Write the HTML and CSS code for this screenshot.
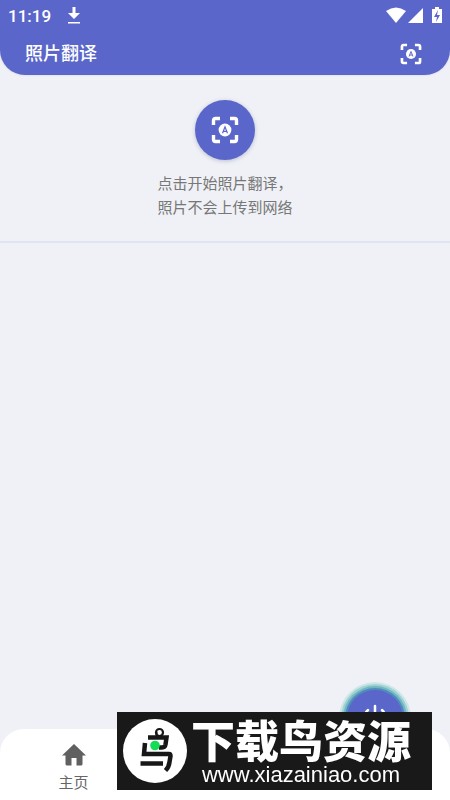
FILE: index.html
```html
<!DOCTYPE html>
<html lang="zh-CN">
<head>
<meta charset="utf-8">
<meta name="viewport" content="width=device-width, initial-scale=1">
<title>照片翻译</title>
<link rel="stylesheet" href="styles.css">
</head>
<body>
<svg class="defs" aria-hidden="true">
  <symbol id="scan" viewBox="0 0 28 28">
    <path d="M2.500 9V4.500Q2.500 2.500 4.500 2.500H9M19 2.500h4.500Q25.500 2.500 25.500 4.500V9M25.500 19v4.500Q25.500 25.500 23.500 25.500H19M9 25.500H4.500Q2.500 25.500 2.500 23.500V19" fill="none" stroke="#fff" stroke-width="3.400"/>
    <circle cx="14" cy="14" r="6.400" fill="#fff"/>
    <path d="M11.500 17.200 14 10.800l2.500 6.400M12.400 15.300h3.200" fill="none" stroke="#5a66c9" stroke-width="1.200"/>
  </symbol>
</svg>
<header class="top">
  <div class="status">
    <span class="clock">11:19</span>
    <svg class="download" viewBox="0 0 14 18"><path d="M5.500 0h3v6H13l-6 6-6-6h4.500zM1 15h12v1.500H1z" fill="#fff"/></svg>
    <svg class="signals" viewBox="0 0 56 18">
      <path d="M0 4Q10-3 20 4L10 16z" fill="#fff"/>
      <path d="M37 1v15H22z" fill="#fff"/>
      <path d="M49 0h4v2h3v14H46V2h3z" fill="#fff"/>
      <path d="m52 3-4 7h3l-1 5 4-7h-3z" fill="#5a66c9"/>
    </svg>
  </div>
  <div class="titlebar">
    <h1>照片翻译</h1>
    <button class="scan-small" aria-label="扫描"><svg viewBox="0 0 28 28"><use href="#scan"/></svg></button>
  </div>
</header>
<main>
  <section class="intro">
    <button class="scan-big" aria-label="开始照片翻译"><svg viewBox="0 0 28 28"><use href="#scan"/></svg></button>
    <p>点击开始照片翻译，<br>照片不会上传到网络</p>
  </section>
</main>
<nav class="bottom">
  <a class="home" href="#">
    <svg viewBox="0 0 24 22"><path d="M12 0 24 11.500h-3.500V20q0 1.500-1.500 1.500h-4.500V14h-5v7.500H5Q3.500 21.500 3.500 20v-8.500H0z" fill="#606060"/></svg>
    <span>主页</span>
  </a>
  <button class="power" aria-label="开关">
    <svg viewBox="0 0 28 28"><path d="M14 2v12M7 6a10.500 10.500 0 1 0 14 0" fill="none" stroke="#fff" stroke-width="2.500" stroke-linecap="round"/></svg>
  </button>
</nav>
<aside class="brand">
  <svg class="bird" viewBox="0 0 64 64">
    <circle cx="32" cy="32" r="32" fill="#fff"/>
    <circle cx="36.500" cy="13.500" r="3.500" fill="none" stroke="#171717" stroke-width="2.200"/>
    <path d="M25 18.500h18.500l-1 7q-.5 3-3.500 3h-3" fill="none" stroke="#171717" stroke-width="4.500"/>
    <path d="M33.500 13v5" stroke="#171717" stroke-width="2"/>
    <path d="M22 24l-1 11h25q1.500 0 1.500 2l-1 6q-.5 5-4 8.500" fill="none" stroke="#171717" stroke-width="4.500"/>
    <path d="M17.500 44.500H40" stroke="#171717" stroke-width="4.500"/>
    <circle cx="32" cy="26.500" r="4.800" fill="#16dc55"/>
  </svg>
  <div class="brand-text">
    <strong>下载鸟资源</strong>
    <span>www.xiazainiao.com</span>
  </div>
</aside>
</body>
</html>
```
FILE: styles.css
```css
* { box-sizing: border-box; }
body {
  margin: 0;
  min-height: 100vh;
  display: flex;
  flex-direction: column;
  background: #eff1f6;
  font-family: Roboto, "Noto Sans CJK SC", sans-serif;
}
button { border: 0; padding: 0; background: none; display: grid; place-items: center; }
svg { display: block; }
.defs { position: absolute; width: 0; height: 0; }
.top {
  background: #5a66c9;
  color: #fff;
  border-radius: 0 0 25px 25px;
  box-shadow: 0 0 2px #c5c9e6;
}
.status { display: flex; align-items: center; height: 31px; padding: 0 8px; }
.clock { font-size: 17px; font-weight: 500; }
.download { width: 14px; height: 18px; margin-left: 16px; }
.signals { width: 56px; height: 18px; margin-left: auto; }
.titlebar {
  display: flex;
  align-items: center;
  justify-content: space-between;
  height: 44px;
  padding: 2px 28px 0 25px;
}
h1 { margin: 0; font-size: 18px; line-height: 42px; font-weight: 500; }
.scan-small svg { width: 22px; height: 22px; }
main { flex: 1; }
.intro {
  display: flex;
  flex-direction: column;
  align-items: center;
  padding: 25px 0 21px;
  border-bottom: 2px solid #e1e5f3;
}
.scan-big {
  width: 60px;
  height: 60px;
  border-radius: 50%;
  background: #5a66c9;
  box-shadow: 0 1px 4px #b9bdd0;
}
.scan-big svg { width: 28px; height: 28px; }
.intro p { margin: 12px 0 0; font-size: 15px; line-height: 24px; color: #777; }
.bottom {
  position: relative;
  height: 71px;
  background: #fff;
  border-radius: 24px 24px 0 0;
}
.home {
  display: flex;
  flex-direction: column;
  align-items: center;
  width: 147px;
  padding-top: 15px;
  color: #666;
  font-size: 15px;
  line-height: 22px;
  text-decoration: none;
}
.home svg { width: 24px; height: 22px; margin-bottom: 6px; }
.power {
  position: absolute;
  right: 47px;
  top: -39px;
  width: 56px;
  height: 56px;
  border-radius: 50%;
  background: #5a66c9;
  box-shadow: 0 0 0 2px #4f8bbd, 0 0 0 4px #72b6c4, 0 0 0 6px #a0d2d2, 0 0 0 8px #cfe6e8;
}
.power svg { width: 28px; height: 28px; }
.brand {
  position: fixed;
  right: 18px;
  bottom: 10px;
  display: flex;
  align-items: center;
  gap: 4px;
  width: 315px;
  height: 78px;
  padding-left: 6px;
  background: #191919;
  color: #fff;
}
.bird { width: 64px; height: 64px; flex: none; }
.brand-text { display: flex; flex-direction: column; align-items: center; padding-top: 6px; white-space: nowrap; }
.brand-text strong {
  font-family: "Noto Sans CJK SC", sans-serif;
  font-size: 44px;
  line-height: 42px;
  font-weight: 900;
}
.brand-text span { font-family: "Liberation Sans", sans-serif; font-size: 22px; line-height: 30px; }
```
